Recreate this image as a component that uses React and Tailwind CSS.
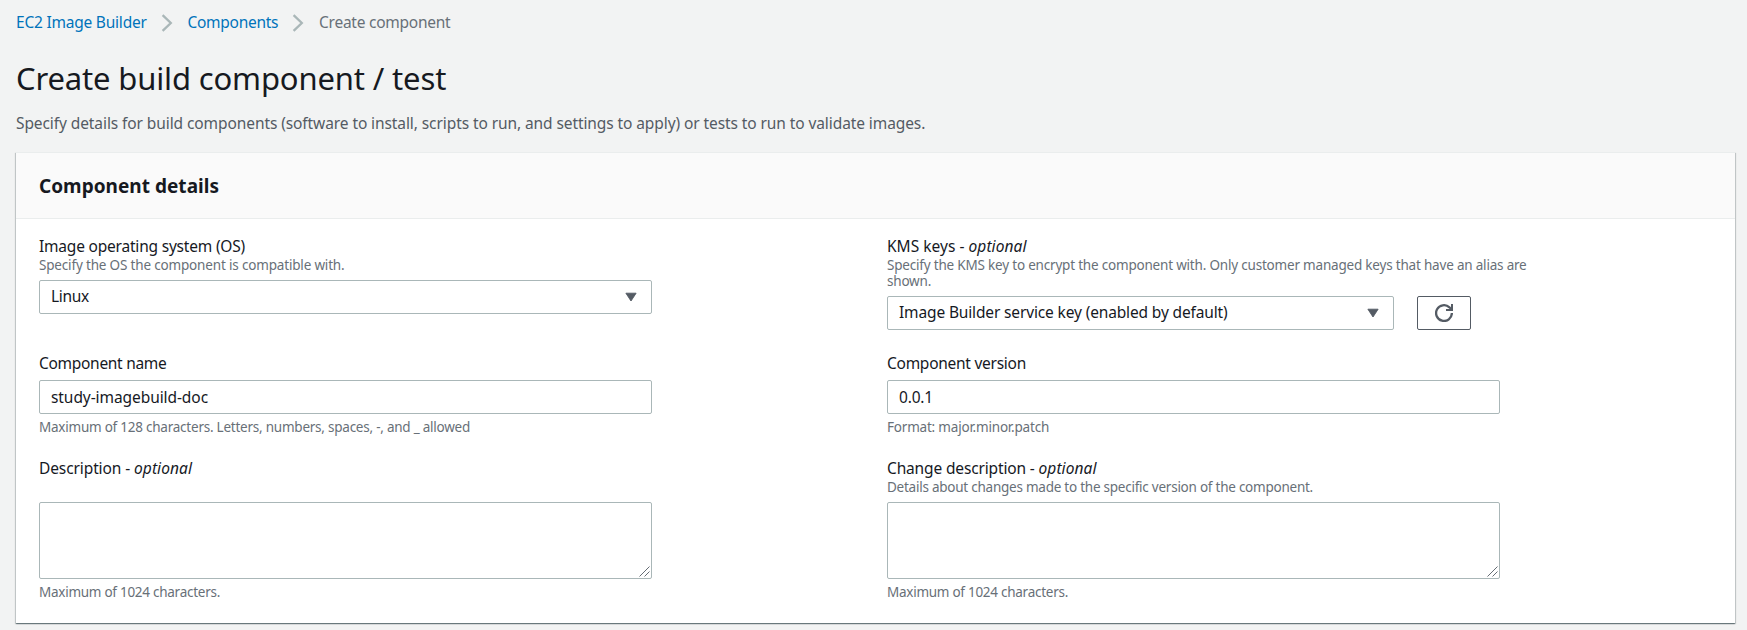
function Chevron() {
  return (
    <svg className="h-[18px] w-[12px] shrink-0" viewBox="0 0 12 18" fill="none" stroke="#aab7b8" strokeWidth="2.3">
      <path d="M1.6 1.2 9.8 9 1.6 16.8" />
    </svg>
  );
}

function Caret() {
  return (
    <svg className="h-[10px] w-[12px] shrink-0" viewBox="0 0 12 10">
      <path d="M0.9 1.2H11.1L6 9Z" fill="#545b64" stroke="#545b64" strokeWidth="0.9" strokeLinejoin="round" />
    </svg>
  );
}

function RefreshIcon() {
  return (
    <svg className="h-[18px] w-[18px]" viewBox="0 0 18 18" fill="none" stroke="#545b64" strokeWidth="2.3">
      <path d="M16.9 9.1A7.9 7.9 0 1 1 14.4 3.3L16.6 5.5" />
      <path d="M17 0V6H11" strokeWidth="2" />
    </svg>
  );
}

function Label({ className, children, optional }) {
  return (
    <div className={"h-[21px] whitespace-nowrap text-[15.5px] leading-[20px] " + className}>
      {children}
      {optional && (
        <>
          {" - "}
          <i className="tracking-[0.08px]">optional</i>
        </>
      )}
    </div>
  );
}

function Hint({ className, children }) {
  return <div className={"text-[13.5px] leading-[16px] text-[#687078] " + className}>{children}</div>;
}

function Select({ className, textClass, children }) {
  return (
    <div className={"flex h-[34px] items-center justify-between rounded-[2px] border border-[#aab7b8] bg-white pr-[14px] pl-[11px] " + className}>
      <span className={"pb-[2px] text-[15.5px] leading-[20px] " + textClass}>{children}</span>
      <Caret />
    </div>
  );
}

const field = "block w-[613px] rounded-[2px] border border-[#aab7b8] bg-white pl-[11px] text-[15.5px] outline-none";

function TextArea() {
  return (
    <div className="relative w-[613px]">
      <textarea className={field + " h-[77px] resize-none"} />
      <svg className="absolute right-[2px] bottom-[2px] h-[11px] w-[11px]" viewBox="0 0 11 11" stroke="#545b64" strokeWidth="0.9">
        <path d="M0.5 10.5 10.5 0.5M5.5 10.5 10.5 5.5" />
      </svg>
    </div>
  );
}

export default function App() {
  return (
    <div className="h-[630px] overflow-hidden bg-[#f2f3f3] pr-[12px] pl-[16px] font-['Noto_Sans',sans-serif] text-[#16191f]">
      <nav className="flex h-[45px] items-center text-[15.5px] leading-[20px] whitespace-nowrap text-[#0073bb]">
        <a className="w-[145px] pb-[2px] tracking-[-0.22px]">EC2 Image Builder</a>
        <Chevron />
        <a className="ml-[14.5px] w-[104.5px] pb-[2px] tracking-[-0.28px]">Components</a>
        <Chevron />
        <span className="ml-[15px] pb-[2px] tracking-[-0.25px] text-[#687078]">Create component</span>
      </nav>
      <h1 className="mt-[13px] text-[31px] leading-[40px] tracking-[-0.15px]">Create build component / test</h1>
      <p className="mt-[15px] h-[39px] text-[15.5px] leading-[20px] tracking-[-0.09px] text-[#545b64]">
        Specify details for build components (software to install, scripts to run, and settings to apply) or tests to run
        to validate images.
      </p>

      <section className="h-[471px] border-t border-[#eaeded] bg-white shadow-[0_1px_1px_0_rgba(0,28,36,0.4),1px_1px_1px_0_rgba(0,28,36,0.15),-1px_1px_1px_0_rgba(0,28,36,0.15)]">
        <header className="flex h-[66px] items-center border-b border-[#eaeded] bg-[#fafafa] px-[23px]">
          <h2 className="text-[19px] leading-[24px] font-bold tracking-[0.025px]">Component details</h2>
        </header>

        <div className="grid grid-cols-[825px_825px] gap-[23px] px-[23px] pt-[17px]">
          <div>
            <Label className="tracking-[-0.202px]">Image operating system (OS)</Label>
            <Hint className="mb-[7px] tracking-[-0.171px]">Specify the OS the component is compatible with.</Hint>
            <Select className="w-[613px]" textClass="tracking-[-0.296px]">Linux</Select>
          </div>
          <div>
            <Label className="tracking-[0.02px]" optional>KMS keys</Label>
            <Hint className="mb-[7px] w-[660px] tracking-[-0.197px]">
              Specify the KMS key to encrypt the component with. Only customer managed keys that have an alias are shown.
            </Hint>
            <div className="flex gap-[23px]">
              <Select className="w-[507px]" textClass="tracking-[-0.145px]">
                Image Builder service key (enabled by default)
              </Select>
              <button className="flex h-[34px] w-[54px] items-center justify-center rounded-[2px] border border-[#545b64] bg-white">
                <RefreshIcon />
              </button>
            </div>
          </div>

          <div>
            <Label className="mb-[6px] tracking-[-0.294px]">Component name</Label>
            <input className={field + " h-[34px] tracking-[-0.074px]"} defaultValue="study-imagebuild-doc" />
            <Hint className="mt-[5px] tracking-[-0.235px]">
              Maximum of 128 characters. Letters, numbers, spaces, -, and _ allowed
            </Hint>
          </div>
          <div>
            <Label className="mb-[6px] tracking-[-0.265px]">Component version</Label>
            <input className={field + " h-[34px] tracking-[-0.181px]"} defaultValue="0.0.1" />
            <Hint className="mt-[5px] tracking-[-0.2px]">Format: major.minor.patch</Hint>
          </div>

          <div>
            <Label className="mb-[23px] tracking-[-0.104px]" optional>Description</Label>
            <TextArea />
            <Hint className="mt-[5px] tracking-[-0.265px]">Maximum of 1024 characters.</Hint>
          </div>
          <div>
            <Label className="tracking-[-0.149px]" optional>Change description</Label>
            <Hint className="mb-[7px] tracking-[-0.242px]">
              Details about changes made to the specific version of the component.
            </Hint>
            <TextArea />
            <Hint className="mt-[5px] tracking-[-0.265px]">Maximum of 1024 characters.</Hint>
          </div>
        </div>
      </section>
    </div>
  );
}
